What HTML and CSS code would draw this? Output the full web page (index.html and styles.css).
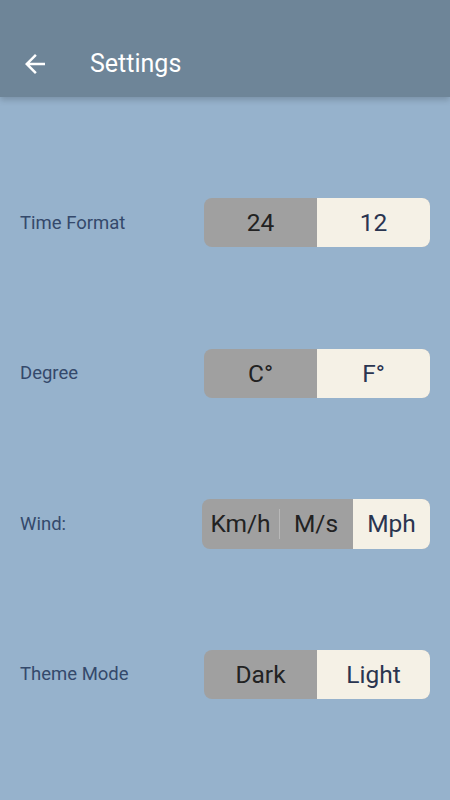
FILE: index.html
```html
<!DOCTYPE html>
<html lang="en">
<head>
    <meta charset="UTF-8">
    <meta name="viewport" content="width=device-width, initial-scale=1.0">
    <title>Settings</title>
    <link rel="stylesheet" href="styles.css">
</head>
<body>
    <header class="app-bar">
        <button class="back-btn" aria-label="Back">
            <svg width="30" height="30" viewBox="0 0 24 24">
                <path d="M20 11H7.83l5.59-5.59L12 4l-8 8 8 8 1.41-1.41L7.83 13H20v-2z" fill="#fff"/>
            </svg>
        </button>
        <h1 class="app-title">Settings</h1>
    </header>

    <main class="settings">
        <div class="setting-row">
            <span class="setting-label">Time Format</span>
            <div class="toggle">
                <span class="seg">24</span>
                <span class="seg active">12</span>
            </div>
        </div>

        <div class="setting-row">
            <span class="setting-label">Degree</span>
            <div class="toggle">
                <span class="seg">C°</span>
                <span class="seg active">F°</span>
            </div>
        </div>

        <div class="setting-row">
            <span class="setting-label">Wind:</span>
            <div class="toggle toggle-three">
                <span class="seg">Km/h</span>
                <span class="seg divided">M/s</span>
                <span class="seg active">Mph</span>
            </div>
        </div>

        <div class="setting-row">
            <span class="setting-label">Theme Mode</span>
            <div class="toggle">
                <span class="seg">Dark</span>
                <span class="seg active">Light</span>
            </div>
        </div>
    </main>
</body>
</html>
```

FILE: styles.css
```css
body {
    margin: 0;
    padding: 0;
    font-family: Roboto, "Liberation Sans", sans-serif;
    background-color: #96b2cc;
    min-height: 100vh;
}

.app-bar {
    height: 97px;
    background-color: #6e8598;
    display: flex;
    align-items: center;
    padding: 30px 0 0 0;
    box-sizing: border-box;
    box-shadow: 0 3px 6px rgba(0, 0, 0, 0.18);
}

.back-btn {
    display: flex;
    background: none;
    border: none;
    padding: 0;
    margin-left: 20px;
    width: 30px;
    height: 30px;
    cursor: pointer;
}

.app-title {
    margin: 0 0 0 40px;
    font-size: 25px;
    font-weight: 400;
    color: #fff;
}

.settings {
    display: flex;
    flex-direction: column;
    gap: 101.5px;
    padding: 101px 20px 0 20px;
}

.setting-row {
    display: flex;
    align-items: center;
    justify-content: space-between;
    height: 49px;
}

.setting-label {
    font-size: 18.5px;
    color: #34496b;
}

.toggle {
    display: flex;
    width: 226px;
    height: 49px;
    border-radius: 8px;
    overflow: hidden;
    background-color: #a0a0a0;
}

.seg {
    flex: 1;
    display: flex;
    align-items: center;
    justify-content: center;
    font-size: 24.5px;
    color: #222;
}

.seg.active {
    background-color: #f5f1e6;
    color: #2a3550;
}

.toggle-three {
    width: 228px;
    height: 50px;
}

.toggle-three .seg:nth-child(1) {
    flex: 0 0 77px;
}

.toggle-three .seg:nth-child(2) {
    flex: 0 0 74px;
}

.toggle-three .seg.active {
    flex: 1;
}

.seg.divided {
    position: relative;
}

.seg.divided::before {
    content: "";
    position: absolute;
    left: 0;
    top: 10px;
    bottom: 10px;
    width: 1px;
    background-color: #b8b8b8;
}
```
